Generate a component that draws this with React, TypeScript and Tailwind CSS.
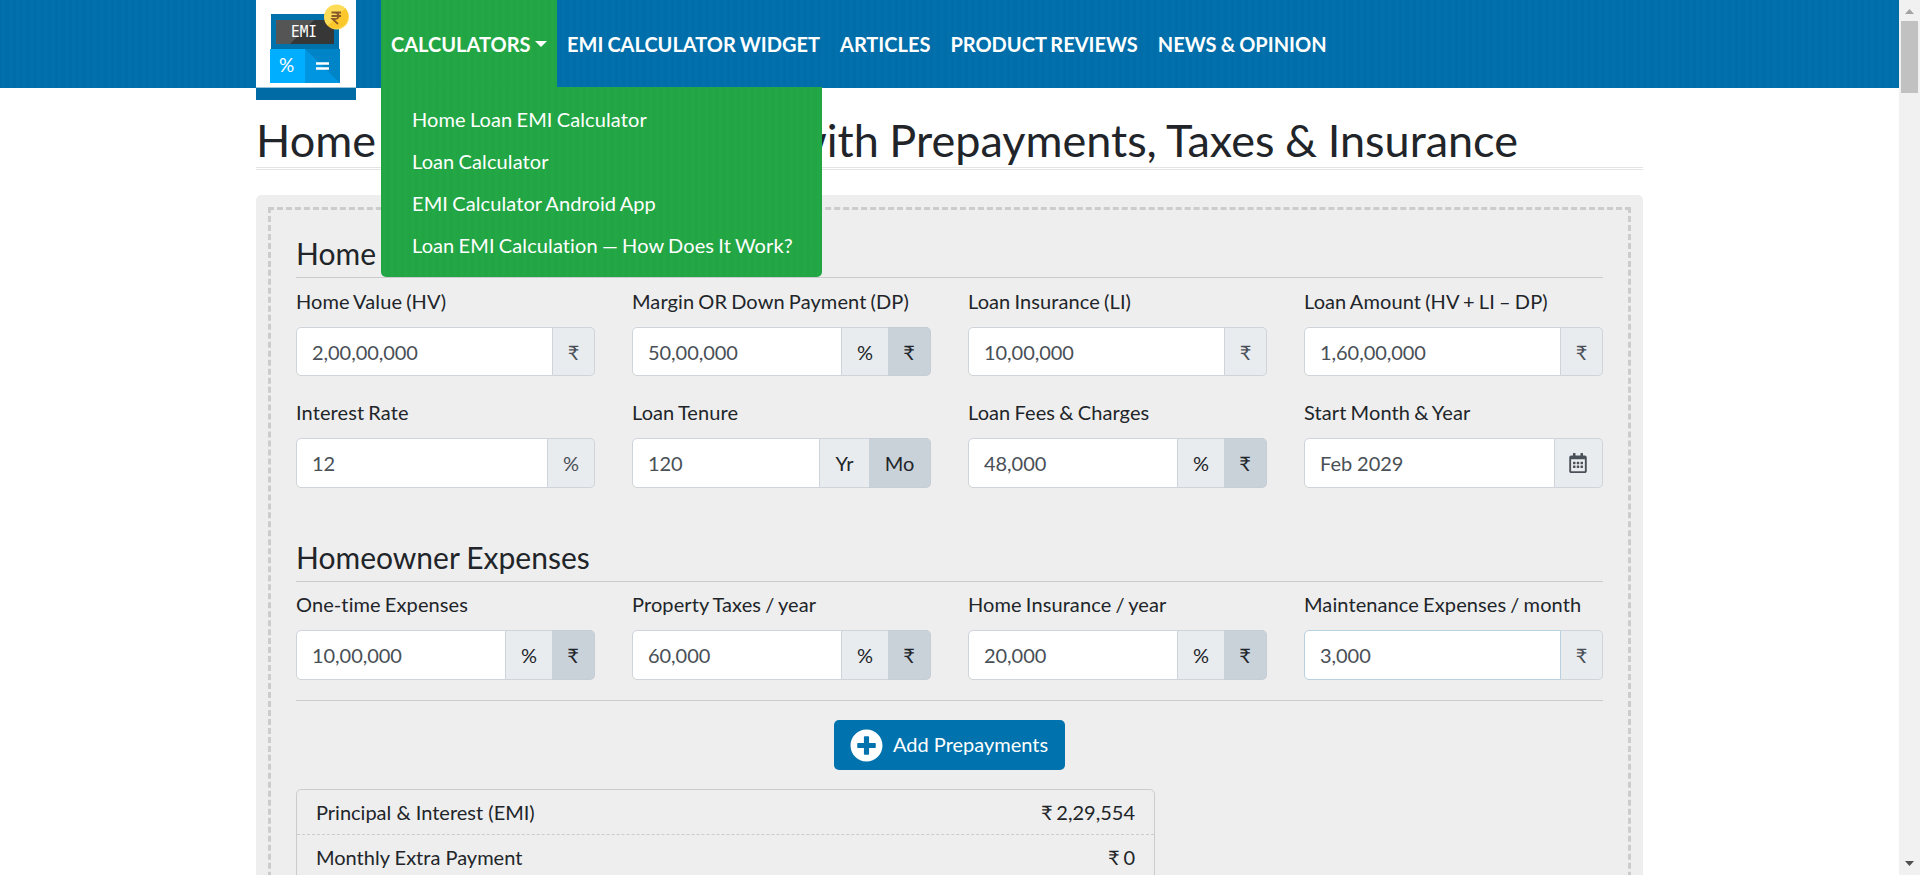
import React from 'react';
import { FaPlusCircle, FaRegCalendarAlt } from 'react-icons/fa';

type Addon = { label: React.ReactNode; width: string; active?: boolean };
type FieldProps = { label: string; value: string; addons: Addon[]; height?: string; toggle?: boolean; focus?: boolean };

const weave =
  'bg-[repeating-linear-gradient(90deg,rgba(0,0,0,0.014)_0px,rgba(0,0,0,0.014)_2px,rgba(255,255,255,0.008)_2px,rgba(255,255,255,0.008)_5px,rgba(0,0,0,0.008)_5px,rgba(0,0,0,0.008)_7px)]';

const rupee: Addon = { label: '₹', width: 'w-[42px]' };
const percent: Addon = { label: '%', width: 'w-[47px]' };
const percentRupee: Addon[] = [
  { label: '%', width: 'w-[46px]' },
  { label: '₹', width: 'w-[43px]', active: true },
];

function Field({ label, value, addons, height = 'h-[50px]', toggle, focus }: FieldProps) {
  return (
    <div>
      <label className="block h-[30px] whitespace-nowrap leading-[28px] tracking-[0.1px] [word-spacing:-1.1px]">{label}</label>
      <div className={`mt-[10px] flex w-[299px] ${height}`}>
        <input
          readOnly
          value={value}
          className={`min-w-0 flex-1 rounded-l-[5px] border bg-white px-[15px] tracking-[-0.05px] text-[#495057] outline-none ${focus ? 'border-[#b8d0e0]' : 'border-[#ced4da]'}`}
        />
        {addons.map((a, i) => (
          <span
            key={i}
            className={`flex shrink-0 items-center justify-center border border-l-0 ${a.width} ${
              a.active ? 'border-[#c5ced7] bg-[#c9d1d9]' : 'border-[#ced4da] bg-[#e9ecef]'
            } ${toggle ? 'text-[#212529]' : 'text-[#495057]'} ${i === addons.length - 1 ? 'rounded-r-[5px]' : 'border-r-0'}`}
          >
            {a.label}
          </span>
        ))}
      </div>
    </div>
  );
}

function Logo() {
  return (
    <svg width="100" height="87" viewBox="0 0 100 87" className="block bg-white">
      <rect x="15" y="14" width="68" height="35" fill="#0072ab" />
      <rect x="20" y="20" width="58" height="24" fill="#555" />
      <path d="M58 20H78V44H34Z" fill="#373737" />
      <rect x="14" y="49" width="35" height="34" fill="#00aeff" />
      <rect x="49" y="49" width="35" height="34" fill="#0095e0" />
      <path d="M49 49H84V83Z" fill="#0084c8" />
      <text x="48" y="36.5" fontSize="15" textAnchor="middle" textLength="26" lengthAdjust="spacingAndGlyphs" fill="#fff" fontFamily="DejaVu Sans Mono">EMI</text>
      <text x="30.5" y="71.5" fontSize="19" textAnchor="middle" fill="#fff" fontFamily="Lato">%</text>
      <path d="M60 63.5H73M60 68.5H73" stroke="#fff" strokeWidth="2.5" />
      <circle cx="80.5" cy="17" r="12.5" fill="#ffdc55" />
      <path d="M89.3 8.2A12.5 12.5 0 0 1 71.7 25.8Z" fill="#fcc72c" />
      <path d="M75.5 12.5H85M75.500 16H85M76 12.5H78.5Q82.5 12.7 82.5 16T78.5 19H76.5L82 24" fill="none" stroke="#8a5a2a" strokeWidth="1.8" />
    </svg>
  );
}

const menu = [
  'Home Loan EMI Calculator',
  'Loan Calculator',
  'EMI Calculator Android App',
  'Loan EMI Calculation — How Does It Work?',
];
const links = ['EMI CALCULATOR WIDGET', 'ARTICLES', 'PRODUCT REVIEWS', 'NEWS & OPINION'];

function SectionTitle({ children }: { children: React.ReactNode }) {
  return (
    <h2 className="flex h-[68px] items-end whitespace-nowrap border-b border-[#ccc] pb-[6px] text-[30px] leading-[36px] [word-spacing:-0.6px]">
      {children}
    </h2>
  );
}

export default function App() {
  return (
    <div className="flex h-[875px] w-[1920px] overflow-hidden bg-white font-['Lato','Noto_Sans',sans-serif] text-[20px] text-[#212529] [font-variant-ligatures:none]">
      <div className="h-full w-[1899px] overflow-hidden">
        <header className={`flex h-[88px] bg-[#006fab] pl-[256px] ${weave}`}>
          <div className="h-[100px] w-[100px]">
            <Logo />
            <div className="h-[13px] border-t border-[#9cc5dc] bg-[#006ba5]" />
          </div>
          <nav className="ml-[25px] flex h-[87px] font-bold leading-[30px] text-white">
            <div className="relative w-[176px]">
              <div className={`flex h-[87px] w-[176px] items-center bg-[#22a745] pl-[10px] pt-px ${weave}`}>
                CALCULATORS
                <span className="ml-[5px] border-x-[6px] border-t-[6px] border-x-transparent border-t-white" />
              </div>
              <ul className={`absolute left-0 top-[87px] z-10 h-[190px] w-[441px] rounded-b-[5px] bg-[#22a745] pt-[11px] font-normal tracking-[0.1px] [word-spacing:-1px] ${weave}`}>
                {menu.map((m) => (
                  <li key={m} className="flex h-[42px] items-center whitespace-nowrap pl-[31px]">{m}</li>
                ))}
              </ul>
            </div>
            {links.map((l) => (
              <a key={l} className="flex h-[87px] items-center whitespace-nowrap px-[10px] pt-px [word-spacing:-0.8px]">{l}</a>
            ))}
          </nav>
        </header>

        <main className="ml-[256px] w-[1387px]">
          <h1 className="flex h-[82px] items-end whitespace-nowrap border-b-[3px] border-double border-[#e5e5e5] text-[45px] leading-[54px] [word-spacing:-0.95px]">
            Home Loan EMI Calculator with Prepayments, Taxes &amp; Insurance
          </h1>
          <section className="mt-[25px] h-[1000px] rounded-[5px] bg-[#eee] p-[12px]">
            <div className="h-full border-[3px] border-dashed border-[#ccc] px-[25px]">
              <SectionTitle>Home Loan Details</SectionTitle>
              <div className="mt-[9px] grid grid-cols-[repeat(4,299px)] gap-x-[37px]">
                <Field label="Home Value (HV)" value="2,00,00,000" addons={[rupee]} height="h-[49px]" />
                <Field label="Margin OR Down Payment (DP)" value="50,00,000" addons={percentRupee} height="h-[49px]" toggle />
                <Field label="Loan Insurance (LI)" value="10,00,000" addons={[rupee]} height="h-[49px]" />
                <Field label="Loan Amount (HV + LI – DP)" value="1,60,00,000" addons={[rupee]} height="h-[49px]" />
              </div>
              <div className="mt-[22px] grid grid-cols-[repeat(4,299px)] gap-x-[37px]">
                <Field label="Interest Rate" value="12" addons={[percent]} />
                <Field
                  label="Loan Tenure"
                  value="120"
                  addons={[{ label: 'Yr', width: 'w-[49px]' }, { label: 'Mo', width: 'w-[62px]', active: true }]}
                  toggle
                />
                <Field label="Loan Fees & Charges" value="48,000" addons={percentRupee} toggle />
                <Field label="Start Month & Year" value="Feb 2029" addons={[{ label: <FaRegCalendarAlt size={20} className="mr-px" />, width: 'w-[48px]' }]} />
              </div>
              <div className="h-[26px]" />
              <SectionTitle>Homeowner Expenses</SectionTitle>
              <div className="mt-[8px] grid grid-cols-[repeat(4,299px)] gap-x-[37px]">
                <Field label="One-time Expenses" value="10,00,000" addons={percentRupee} toggle />
                <Field label="Property Taxes / year" value="60,000" addons={percentRupee} toggle />
                <Field label="Home Insurance / year" value="20,000" addons={percentRupee} toggle />
                <Field label="Maintenance Expenses / month" value="3,000" addons={[rupee]} focus />
              </div>
              <hr className="mt-[20px] border-[#ccc]" />
              <button className="mx-auto mt-[19px] flex h-[50px] w-[231px] items-center rounded-[5px] bg-[#0072ad] pl-[16px] text-white">
                <FaPlusCircle size={33} className="mr-[10px] shrink-0" />
                <span className="whitespace-nowrap pb-[2px]">Add Prepayments</span>
              </button>
              <div className="mt-[19px] h-[200px] w-[859px] rounded-[5px] border border-[#ccc]">
                <div className="flex h-[45px] items-center justify-between border-b border-dashed border-[#ccc] px-[19px]">
                  <span>Principal &amp; Interest (EMI)</span>
                  <span className="[word-spacing:-1.4px]">₹ 2,29,554</span>
                </div>
                <div className="flex h-[45px] items-center justify-between border-b border-dashed border-[#ccc] px-[19px]">
                  <span>Monthly Extra Payment</span>
                  <span className="[word-spacing:-1.4px]">₹ 0</span>
                </div>
              </div>
            </div>
          </section>
        </main>
      </div>
      <div className="flex h-full w-[21px] flex-col items-center bg-[#f1f1f1]">
        <svg width="21" height="21" viewBox="0 0 21 21"><path d="M6 14L10.5 9L15 14Z" fill="#a3a3a3" /></svg>
        <div className="h-[72px] w-[17px] bg-[#c1c1c1]" />
        <svg width="21" height="21" viewBox="0 0 21 21" className="mt-auto"><path d="M6 7L10.5 12L15 7Z" fill="#505050" /></svg>
      </div>
    </div>
  );
}
